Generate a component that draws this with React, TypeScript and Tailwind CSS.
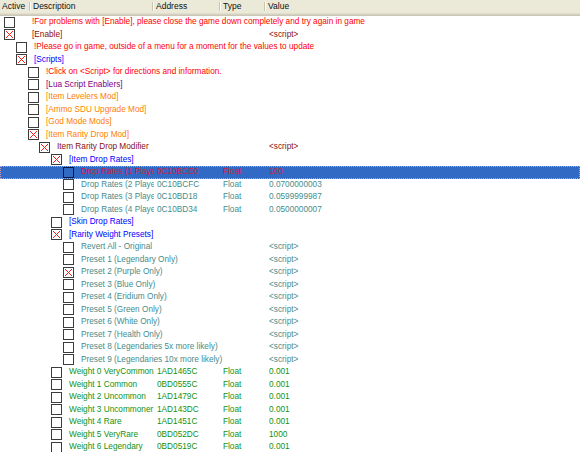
type Row = {
  lvl: number
  text: string
  color: string
  checked?: boolean
  addr?: string
  type?: string
  value?: string
  selected?: boolean
}

const RED = '#ff0000'
const MAROON = '#8b0f0f'
const BLUE = '#0000ff'
const PURPLE = '#800080'
const ORANGE = '#ff8000'
const TEAL = '#468c8c'
const GREEN = '#129212'

const rows: Row[] = [
  { lvl: 0, text: '!For problems with [Enable], please close the game down completely and try again in game', color: RED },
  { lvl: 0, text: '[Enable]', color: MAROON, checked: true, value: '<script>' },
  { lvl: 1, text: '!Please go in game, outside of a menu for a moment for the values to update', color: RED },
  { lvl: 1, text: '[Scripts]', color: BLUE, checked: true },
  { lvl: 2, text: '!Click on <Script> for directions and information.', color: RED },
  { lvl: 2, text: '[Lua Script Enablers]', color: PURPLE },
  { lvl: 2, text: '[Item Levelers Mod]', color: ORANGE },
  { lvl: 2, text: '[Ammo SDU Upgrade Mod]', color: ORANGE },
  { lvl: 2, text: '[God Mode Mods]', color: ORANGE },
  { lvl: 2, text: '[Item Rarity Drop Mod]', color: ORANGE, checked: true },
  { lvl: 3, text: 'Item Rarity Drop Modifier', color: MAROON, checked: true, value: '<script>' },
  { lvl: 4, text: '[Item Drop Rates]', color: BLUE, checked: true },
  { lvl: 5, text: 'Drop Rates (1 Player)', color: TEAL, addr: '0C10BCE0', type: 'Float', value: '100', selected: true },
  { lvl: 5, text: 'Drop Rates (2 Player)', color: TEAL, addr: '0C10BCFC', type: 'Float', value: '0.0700000003' },
  { lvl: 5, text: 'Drop Rates (3 Player)', color: TEAL, addr: '0C10BD18', type: 'Float', value: '0.0599999987' },
  { lvl: 5, text: 'Drop Rates (4 Player)', color: TEAL, addr: '0C10BD34', type: 'Float', value: '0.0500000007' },
  { lvl: 4, text: '[Skin Drop Rates]', color: BLUE },
  { lvl: 4, text: '[Rarity Weight Presets]', color: BLUE, checked: true },
  { lvl: 5, text: 'Revert All - Original', color: TEAL, value: '<script>' },
  { lvl: 5, text: 'Preset 1 (Legendary Only)', color: TEAL, value: '<script>' },
  { lvl: 5, text: 'Preset 2 (Purple Only)', color: TEAL, value: '<script>', checked: true },
  { lvl: 5, text: 'Preset 3 (Blue Only)', color: TEAL, value: '<script>' },
  { lvl: 5, text: 'Preset 4 (Eridium Only)', color: TEAL, value: '<script>' },
  { lvl: 5, text: 'Preset 5 (Green Only)', color: TEAL, value: '<script>' },
  { lvl: 5, text: 'Preset 6 (White Only)', color: TEAL, value: '<script>' },
  { lvl: 5, text: 'Preset 7 (Health Only)', color: TEAL, value: '<script>' },
  { lvl: 5, text: 'Preset 8 (Legendaries 5x more likely)', color: TEAL, value: '<script>' },
  { lvl: 5, text: 'Preset 9 (Legendaries 10x more likely)', color: TEAL, value: '<script>' },
  { lvl: 4, text: 'Weight 0 VeryCommon', color: GREEN, addr: '1AD1465C', type: 'Float', value: '0.001' },
  { lvl: 4, text: 'Weight 1 Common', color: GREEN, addr: '0BD0555C', type: 'Float', value: '0.001' },
  { lvl: 4, text: 'Weight 2 Uncommon', color: GREEN, addr: '1AD1479C', type: 'Float', value: '0.001' },
  { lvl: 4, text: 'Weight 3 Uncommoner', color: GREEN, addr: '1AD143DC', type: 'Float', value: '0.001' },
  { lvl: 4, text: 'Weight 4 Rare', color: GREEN, addr: '1AD1451C', type: 'Float', value: '0.001' },
  { lvl: 4, text: 'Weight 5 VeryRare', color: GREEN, addr: '0BD052DC', type: 'Float', value: '1000' },
  { lvl: 4, text: 'Weight 6 Legendary', color: GREEN, addr: '0BD0519C', type: 'Float', value: '0.001' },
]

// checkbox x and text x per tree level
const BOX_X = [4, 16, 28, 39, 51, 63]
const TEXT_X = [32, 34, 46, 57, 69, 81]

function Check({ checked, selected }: { checked?: boolean; selected?: boolean }) {
  return (
    <svg width="11" height="11" viewBox="0 0 11 11" className="block shrink-0" shapeRendering="crispEdges">
      <rect x="0.5" y="0.5" width="10" height="10" fill={selected ? 'none' : '#fff'} stroke={selected ? '#0a1640' : '#3c3c3c'} />
      {checked && (
        <g stroke={selected ? '#0a1640' : '#ff1a1a'} strokeWidth="1">
          <line x1="2" y1="2" x2="9" y2="9" />
          <line x1="9" y1="2" x2="2" y2="9" />
        </g>
      )}
    </svg>
  )
}

function HeaderCell({ label, w, last }: { label: string; w?: string; last?: boolean }) {
  return (
    <div className={`${w ?? 'flex-1'} relative flex items-center pl-[2px]`}>
      <span>{label}</span>
      {!last && <div className="absolute right-0 top-[2px] h-[9px] w-[2px] border-l border-[#c9c5b3] bg-white" />}
    </div>
  )
}

function TableRow({ r, even }: { r: Row; even: boolean }) {
  const textColor = r.selected ? '#d0203c' : r.color
  return (
    <div
      className={`relative flex items-center whitespace-nowrap ${even ? 'h-[13px]' : 'h-[12px]'} ${r.selected ? 'bg-[#316ac5] outline outline-1 outline-dotted outline-[#d49ab4] -outline-offset-1' : ''}`}
      style={{ color: textColor }}
    >
      <div className={`relative flex h-full w-[154px] shrink-0 items-center ${r.addr ? 'overflow-hidden' : ''}`}>
        <div className="absolute" style={{ left: BOX_X[r.lvl], top: even ? 1 : 0 }}>
          <Check checked={r.checked} selected={r.selected} />
        </div>
        <span className="absolute" style={{ left: TEXT_X[r.lvl] }}>{r.text}</span>
      </div>
      <div className="w-[67px] shrink-0 pl-[3px]">{r.addr}</div>
      <div className="w-[45px] shrink-0 pl-[2px]">{r.type}</div>
      <div className="flex-1 pl-[3px]">{r.value}</div>
    </div>
  )
}

export default function App() {
  return (
    <div className="h-[452px] w-[580px] overflow-hidden bg-white text-[8.25px] leading-none" style={{ fontFamily: '"Liberation Sans", Arial, sans-serif' }}>
      <div className="flex h-[13px] bg-[#ebe9d8] text-[8.5px] text-[#111]">
        <HeaderCell label="Active" w="w-[31px]" />
        <HeaderCell label="Description" w="w-[123px]" />
        <HeaderCell label="Address" w="w-[67px]" />
        <HeaderCell label="Type" w="w-[45px]" />
        <HeaderCell label="Value" last />
      </div>
      <div className="h-px bg-[#e2decd]" />
      <div className="h-px bg-[#d6d2c2]" />
      <div className="h-px bg-[#cbc7b8]" />
      <div className="flex flex-col">
        {rows.map((r, i) => (
          <TableRow key={i} r={r} even={i % 2 === 0} />
        ))}
      </div>
    </div>
  )
}
